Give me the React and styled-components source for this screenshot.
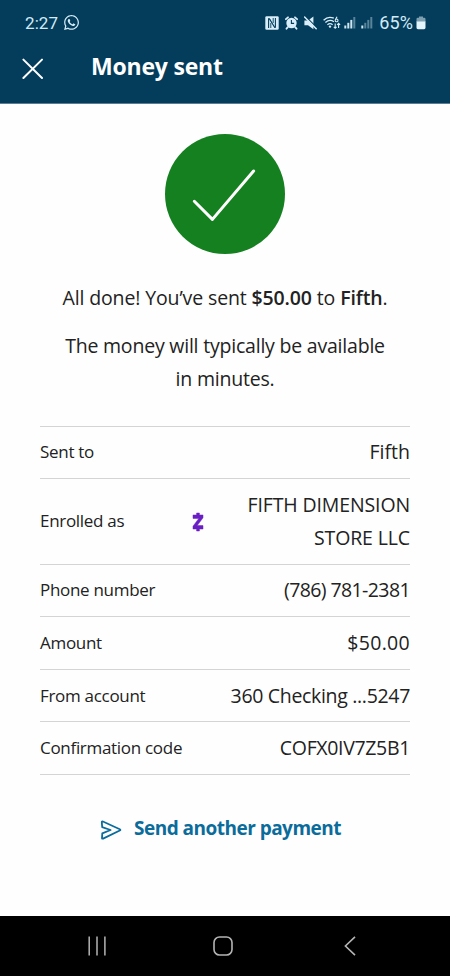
import React from "react"
import styled, { createGlobalStyle } from "styled-components"
import { FaWhatsapp } from "react-icons/fa"

const details = [
  { label: "Sent to", value: "Fifth" },
  { label: "Enrolled as", value: "FIFTH DIMENSION STORE LLC", zelle: true, spacing: -0.13 },
  { label: "Phone number", value: "(786) 781-2381", spacing: -0.6 },
  { label: "Amount", value: "$50.00", spacing: 0.3 },
  { label: "From account", value: "360 Checking ...5247", spacing: -0.32 },
  { label: "Confirmation code", value: "COFX0IV7Z5B1", spacing: -0.34 },
]

const NfcIcon = () => (
  <svg width="14" height="14" viewBox="0 0 14 14" fill="none">
    <rect x="0.3" y="0.3" width="13.4" height="13.4" rx="1.2" fill="#d9eef8" />
    <path
      d="M3.6 12V3.1Q3.6 2 4.6 3L9.2 10.6M10.4 2v8.9Q10.4 12 9.4 11L4.8 3.4"
      stroke="#033d5b"
      strokeWidth="1.1"
    />
    <path d="M5.8 7v5M8.2 2v5" stroke="#033d5b" strokeWidth="0.9" />
  </svg>
)

const AlarmIcon = () => (
  <svg width="13" height="14" viewBox="0 0 13 14" fill="none">
    <circle cx="6.5" cy="7" r="5.2" fill="#d9eef8" />
    <path
      d="M0.9 3.2 3 1.3M12.1 3.2 10 1.3M2.8 11.2 1.5 12.7M10.2 11.2l1.3 1.5"
      stroke="#d9eef8"
      strokeWidth="1.8"
      strokeLinecap="round"
    />
    <path d="M6.4 4v3.4h2.7" stroke="#033d5b" strokeWidth="1.1" />
  </svg>
)

const MuteIcon = () => (
  <svg width="13" height="14" viewBox="0 0 13 14" fill="none">
    <path d="M0.4 4.6H4L9.4 0.4v12.8L4 9.2H0.4Z" fill="#d9eef8" />
    <path d="M1.6 0.4 13 11.8" stroke="#033d5b" strokeWidth="1.2" />
    <path d="M0.6 1 12.2 12.8" stroke="#d9eef8" strokeWidth="1.5" strokeLinecap="round" />
  </svg>
)

const WifiIcon = () => (
  <svg width="18" height="14" viewBox="0 0 18 14" fill="none" stroke="#d9eef8">
    <path d="M0.6 4.2C3.6 1.2 7.6 0.8 10.8 2.2" strokeWidth="1.3" />
    <path d="M2.4 6.6C5 4.2 8.4 4 11 5.8" strokeWidth="1.3" />
    <path d="M4.4 8.8c1.6-1.4 3.6-1.4 5.2 0" strokeWidth="1.3" />
    <circle cx="7" cy="10.6" r="1.2" fill="#d9eef8" stroke="none" />
    <circle cx="13.6" cy="4.4" r="1.4" strokeWidth="1.1" />
    <path d="M12.4 3.8 14 0.7" strokeWidth="1.1" />
    <path d="M12.2 7.6v4.6M10.8 10.8l1.4 1.5 1.4-1.5" strokeWidth="1.1" />
    <path d="M15.6 12V7.2M14.1 8.8l1.5-1.5 1.5 1.5" strokeWidth="1.1" />
  </svg>
)

const SignalIcon = ({ strength }) => (
  <svg width="12" height="13" viewBox="0 0 12 13" fill="#d9eef8">
    {[3, 5.7, 8.6, 11.5].map((h, i) => (
      <rect
        key={h}
        x={0.3 + i * 3}
        y={12.5 - h}
        width="2"
        height={h}
        opacity={i < strength ? 0.95 : 0.4}
      />
    ))}
  </svg>
)

const BatteryIcon = () => (
  <svg width="10" height="14" viewBox="0 0 10 14" fill="none">
    <path d="M3 0.4h4v1.4h1.2a1.3 1.3 0 0 1 1.3 1.3V6h-9V3.1a1.3 1.3 0 0 1 1.3-1.3H3Z" fill="#7d9fb0" />
    <path d="M0.5 5.5h9v6.3a1.4 1.4 0 0 1-1.4 1.4H1.9a1.4 1.4 0 0 1-1.4-1.4Z" fill="#e6f5fc" />
  </svg>
)

const CloseIcon = () => (
  <svg width="22" height="22" viewBox="0 0 22 22" fill="none">
    <path d="M1.4 1.6 20 20M20 1.6 1.4 20" stroke="#fff" strokeWidth="2" strokeLinecap="round" />
  </svg>
)

const CheckIcon = () => (
  <svg width="120" height="120" viewBox="0 0 120 120" fill="none">
    <path
      d="M29.3 67.3 47.4 85.4 88.6 37"
      stroke="#fff"
      strokeWidth="3"
      strokeLinecap="round"
      strokeLinejoin="round"
    />
  </svg>
)

const ZelleIcon = () => (
  <svg width="12" height="20" viewBox="0 0 12 20">
    <path
      d="M4.6 1h2.8v2H11v2.8L5.2 13.6H11V17H7.4v2H4.6v-2H1v-2.8L6.8 6.4H1V3h3.6Z"
      fill="#6a1fc4"
      stroke="#6a1fc4"
      strokeWidth="0.5"
      strokeLinejoin="round"
    />
  </svg>
)

const SendIcon = () => (
  <svg width="22" height="20" viewBox="0 0 22 20" fill="none" stroke="#0b6c9b">
    <path
      d="M1.8 2.2Q1.8 1 2.9 1.5L19.8 9.2Q21 9.9 19.8 10.5L3.1 18.6Q2 19 2 17.9L2.3 13.3 10.6 10 2.2 7.2Z"
      strokeWidth="1.8"
      strokeLinejoin="round"
    />
  </svg>
)

const App = () => {
  return (
    <Screen>
      <GlobalStyle />
      <StatusBar>
        <Clock>2:27</Clock>
        <FaWhatsapp size={17} />
        <StatusIcons>
          <NfcIcon />
          <AlarmIcon />
          <MuteIcon />
          <WifiIcon />
          <Signals>
            <SignalIcon strength={3} />
            <SignalIcon strength={1} />
          </Signals>
        </StatusIcons>
        <BatteryLevel>65%</BatteryLevel>
        <BatteryIcon />
      </StatusBar>
      <Header>
        <CloseButton aria-label="Close">
          <CloseIcon />
        </CloseButton>
        <Title>Money sent</Title>
      </Header>
      <Content>
        <SuccessBadge>
          <CheckIcon />
        </SuccessBadge>
        <Message $spacing={-0.13}>
          All done! You’ve sent <strong>$50.00</strong> to <strong>Fifth</strong>.
        </Message>
        <Message $spacing={-0.21}>
          The money will typically be available
          <br />
          in minutes.
        </Message>
        <Details>
          {details.map(({ label, value, zelle, spacing }) => (
            <Row key={label}>
              <Label>{label}</Label>
              {zelle && (
                <ZelleMark>
                  <ZelleIcon />
                </ZelleMark>
              )}
              <Value $spacing={spacing}>{value}</Value>
            </Row>
          ))}
        </Details>
        <SendAnother>
          <SendIcon />
          Send another payment
        </SendAnother>
      </Content>
      <NavBar>
        <svg width="20" height="20" viewBox="0 0 20 20" stroke="#b4b4b4" strokeWidth="1.5">
          <path d="M2.2 0.5v19M10 0.5v19M17.9 0.5v19" />
        </svg>
        <svg width="20" height="20" viewBox="0 0 20 20" fill="none" stroke="#b4b4b4" strokeWidth="1.6">
          <rect x="1" y="1" width="18" height="18" rx="5.5" />
        </svg>
        <svg width="12" height="20" viewBox="0 0 12 20" fill="none" stroke="#b4b4b4" strokeWidth="1.6">
          <path d="M11 0.8 1.4 10 11 19.2" />
        </svg>
      </NavBar>
    </Screen>
  )
}

const GlobalStyle = createGlobalStyle`
  * {
    box-sizing: border-box;
  }

  body {
    margin: 0;
    background: #fff;
  }
`

const Screen = styled.div`
  display: flex;
  flex-direction: column;
  width: 450px;
  height: 976px;
  overflow: hidden;
  background: #fefefe;
  color: #222;
  font-family: "Open Sans", "Noto Sans", sans-serif;

  svg {
    display: block;
    flex-shrink: 0;
  }
`

const StatusBar = styled.div`
  display: flex;
  align-items: center;
  height: 45px;
  padding: 0 24px 0 25px;
  background: #033d5b;
  color: #d3ebf6;
  font-family: Roboto, sans-serif;
`

const Clock = styled.span`
  width: 38px;
  font-size: 17px;
  letter-spacing: 0.1px;
`

const StatusIcons = styled.div`
  display: flex;
  align-items: center;
  gap: 6px;
  margin-left: auto;
`

const Signals = styled.div`
  display: flex;
  gap: 5px;
  margin-left: -3px;
`

const BatteryLevel = styled.span`
  margin: 0 3px 0 6px;
  font-size: 18px;
  letter-spacing: 0.1px;
`

const Header = styled.header`
  display: flex;
  align-items: flex-start;
  height: 59px;
  padding: 5px 22px 0;
  border-bottom: 1px solid #5d7b91;
  background: #033d5b;
`

const CloseButton = styled.button`
  padding: 8px 0 0;
  border: 0;
  background: none;
`

const Title = styled.h1`
  margin: 0 0 0 47px;
  color: #fff;
  font-size: 23px;
  font-weight: 700;
  line-height: 32px;
  letter-spacing: -0.2px;
`

const Content = styled.main`
  display: flex;
  flex: 1;
  flex-direction: column;
  align-items: center;
  padding: 30px 40px 0;
`

const SuccessBadge = styled.div`
  width: 120px;
  height: 120px;
  margin-bottom: 27px;
  border-radius: 50%;
  background: #158020;
`

const Message = styled.p`
  margin: 0 0 15px;
  font-size: 19.5px;
  line-height: 33px;
  letter-spacing: ${(props) => props.$spacing}px;
  text-align: center;

  strong {
    font-weight: 600;
  }
`

const Details = styled.div`
  width: 370px;
  margin-top: 15.5px;
  border-top: 1px solid #d4d4d4;
`

const Row = styled.div`
  display: flex;
  align-items: center;
  padding: 8.8px 0 9.8px;
  border-bottom: 1px solid #d4d4d4;
`

const Label = styled.span`
  flex: 1;
  font-size: 17px;
  letter-spacing: -0.3px;
`

const ZelleMark = styled.span`
  width: 24px;
  padding-top: 2px;
`

const Value = styled.span`
  max-width: 194px;
  font-size: 19.5px;
  line-height: 33px;
  letter-spacing: ${(props) => props.$spacing || 0}px;
  text-align: right;
`

const SendAnother = styled.button`
  display: flex;
  align-items: center;
  gap: 12px;
  margin: 37px 9px 0 0;
  padding: 0;
  border: 0;
  background: none;
  color: #0b6c9b;
  font-family: inherit;
  font-size: 19px;
  font-weight: 700;
  line-height: 32px;
  letter-spacing: -0.52px;

  svg {
    margin-top: 4px;
  }
`

const NavBar = styled.nav`
  display: grid;
  grid-template-columns: 126px 131px auto;
  align-items: center;
  height: 60px;
  padding-left: 87px;
  background: #000;
`

export default App
